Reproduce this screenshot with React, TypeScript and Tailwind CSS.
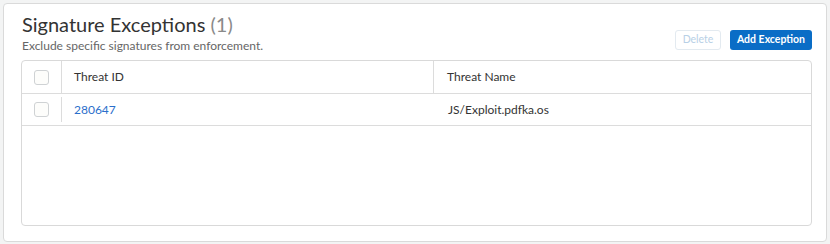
import React from "react";

// ─────────────────────────────────────────
// Subcomponents
// ─────────────────────────────────────────

function Checkbox() {
  return (
    <span className="block h-[15px] w-[15px] rounded-[3px] border border-[#cfd2d4] bg-[#fdfdfb]" />
  );
}

function Header() {
  return (
    <div className="flex items-end justify-between">
      <div className="ml-[1px]">
        <h2 className="text-[20px] leading-[24px] text-[#333]">
          Signature Exceptions <span className="text-[#8a8a8a]">(1)</span>
        </h2>
        <p className="mt-[3px] text-[12px] leading-[14px] text-[#666]">
          Exclude specific signatures from enforcement.
        </p>
      </div>
      <div className="mb-[3px] flex gap-[9px]">
        <button
          disabled
          className="h-[20px] w-[46px] rounded-[3px] border border-[#e3eaf0] bg-white text-[10.5px] text-[#b8d0e6]"
        >
          Delete
        </button>
        <button className="h-[20px] w-[82px] rounded-[3px] bg-[#0a6dc6] text-[10.5px] font-bold text-white">
          Add Exception
        </button>
      </div>
    </div>
  );
}

function ExceptionsTable() {
  return (
    <div className="mt-[7px] h-[166px] rounded-[4px] border border-[#d9d9d9] bg-white">
      <div className="flex h-[33px] items-center border-b border-[#dcdcdc] text-[12px] text-[#333]">
        <div className="flex h-full w-[40px] items-center justify-center border-r border-[#dcdcdc]">
          <Checkbox />
        </div>
        <div className="flex h-full w-[372px] items-center border-r border-[#dcdcdc] pl-[12px]">
          Threat ID
        </div>
        <div className="pl-[13px]">Threat Name</div>
      </div>
      <div className="flex h-[32px] items-center border-b border-[#dcdcdc] text-[12px]">
        <div className="flex w-[40px] items-center justify-center self-stretch py-[3px]">
          <div className="flex h-full w-full items-center justify-center border-r border-[#dcdcdc]">
            <Checkbox />
          </div>
        </div>
        <div className="w-[372px] pl-[12px] text-[#2b6fcb]">280647</div>
        <div className="pl-[14px] text-[#333]">JS/Exploit.pdfka.os</div>
      </div>
    </div>
  );
}

// ─────────────────────────────────────────
// App
// ─────────────────────────────────────────

export default function App() {
  return (
    <div
      className="h-[244px] w-[830px] bg-[#f3f4f4] pb-[2px] pl-[3px] pr-[3px] pt-[3px]"
      style={{ fontFamily: "Lato, 'Noto Sans', sans-serif" }}
    >
      <div className="h-[239px] w-[824px] rounded-[4px] border border-[#dadada] bg-white pl-[17px] pr-[14px] pt-[8px]">
        <Header />
        <ExceptionsTable />
      </div>
    </div>
  );
}
